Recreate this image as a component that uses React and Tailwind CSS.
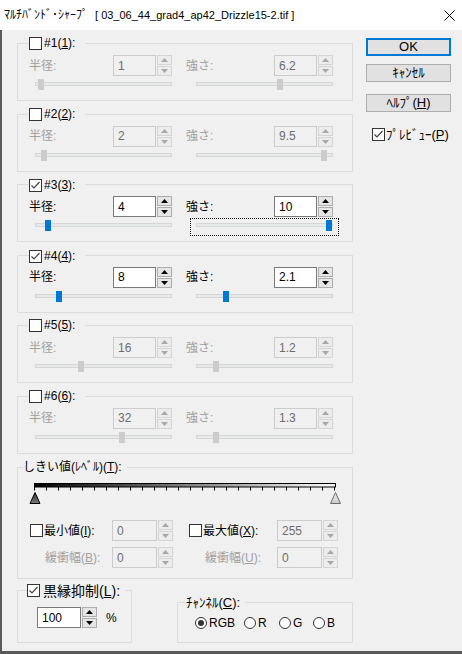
import React from 'react'

// band settings: radius / strength and where their thumbs sit
const BANDS = [
  { n: 1, on: false, r: '1', s: '6.2', rp: 9, sp: 87 },
  { n: 2, on: false, r: '2', s: '9.5', rp: 12, sp: 131 },
  { n: 3, on: true, r: '4', s: '10', rp: 16, sp: 136, focus: true },
  { n: 4, on: true, r: '8', s: '2.1', rp: 27, sp: 33 },
  { n: 5, on: false, r: '16', s: '1.2', rp: 49, sp: 23 },
  { n: 6, on: false, r: '32', s: '1.3', rp: 90, sp: 23 },
]

function Check({ checked }) {
  return (
    <span className="w-[13px] h-[13px] border border-[#333333] bg-white flex items-center justify-center shrink-0">
      {checked && (
        <svg width="11" height="11" viewBox="0 0 11 11">
          <path d="M1.5 5.5 L4 8 L9.5 2" fill="none" stroke="#444444" strokeWidth="1.2" />
        </svg>
      )}
    </span>
  )
}

function Radio({ on }) {
  return (
    <span className="w-[12px] h-[12px] rounded-full border border-[#333333] bg-white flex items-center justify-center shrink-0">
      {on && <span className="w-[6px] h-[6px] rounded-full bg-[#333333]" />}
    </span>
  )
}

function Arrow({ up, color }) {
  return (
    <svg width="7" height="4" viewBox="0 0 7 4">
      <path d={up ? 'M0 4L3.5 0L7 4Z' : 'M0 0L3.5 4L7 0Z'} fill={color} />
    </svg>
  )
}

function Spin({ disabled }) {
  const btn = disabled
    ? 'h-[10px] border border-[#d5d5d5] bg-[#ececec] flex items-center justify-center'
    : 'h-[10px] border border-[#adadad] bg-[#e5e5e5] flex items-center justify-center'
  const color = disabled ? '#a8a8a8' : '#000000'
  return (
    <div className="ml-[1px] w-[15px] h-[21px] flex flex-col justify-between shrink-0">
      <div className={btn}><Arrow up color={color} /></div>
      <div className={btn}><Arrow color={color} /></div>
    </div>
  )
}

function Field({ value, disabled, wide }) {
  const w = wide ? 'w-[45px]' : 'w-[43px]'
  const look = disabled
    ? 'border-[#cccccc] bg-[#f0f0f0] text-[#6d6d6d]'
    : 'border-[#7a7a7a] bg-white text-black'
  return (
    <div className={`${w} h-[21px] border px-[4px] flex items-center text-[12px] shrink-0 ${look}`}>
      {value}
    </div>
  )
}

function Slider({ pos, disabled, focus }) {
  return (
    <div className={`relative w-[149px] h-[18px] border ${focus ? 'border-dotted border-black' : 'border-transparent'}`}>
      <div className="absolute left-[5px] right-[5px] top-[4px] h-[4px] bg-[#e7eaea] border border-[#d6d6d6]" />
      <div
        className={`absolute top-[1px] w-[6px] h-[11px] ${disabled ? 'bg-[#cccccc]' : 'bg-[#0078d7]'}`}
        style={{ left: pos - 1 }}
      />
    </div>
  )
}

function Band({ n, on, r, s, rp, sp, focus }) {
  const lab = on ? 'text-black' : 'text-[#a0a0a0]'
  return (
    <fieldset className="border border-[#dcdcdc] w-[336px]">
      <legend className="ml-[11px] pr-[10px] h-[13px]">
        <span className="inline-flex items-center gap-[2px] h-[13px] leading-[13px]">
          <Check checked={on} />
          <span>#{n}(<span className="underline">{n}</span>):</span>
        </span>
      </legend>
      <div className="pt-[5px] pb-[5px]">
        <div className="flex items-center pl-[11px] h-[21px]">
          <span className={`w-[84px] ${lab}`}>半径:</span>
          <Field value={r} disabled={!on} />
          <Spin disabled={!on} />
          <span className={`w-[88px] ml-[14px] ${lab}`}>強さ:</span>
          <Field value={s} disabled={!on} />
          <Spin disabled={!on} />
        </div>
        <div className="flex pl-[11px] mt-[1px] gap-[12px]">
          <Slider pos={rp} disabled={!on} />
          <Slider pos={sp} disabled={!on} focus={focus} />
        </div>
      </div>
    </fieldset>
  )
}

function LevelBar() {
  const ticks = []
  for (let i = 0; i <= 25; i++) ticks.push(5.5 + i * 12)
  return (
    <svg width="314" height="21" viewBox="0 0 314 21" className="ml-[11px] block">
      <defs>
        <linearGradient id="lv" x1="0" x2="1" y1="0" y2="0">
          <stop offset="0" stopColor="#000000" />
          <stop offset="1" stopColor="#ffffff" />
        </linearGradient>
        <linearGradient id="dk" x1="0" x2="0" y1="0" y2="1">
          <stop offset="0" stopColor="#2a2a2a" />
          <stop offset="1" stopColor="#7a7a7a" />
        </linearGradient>
        <linearGradient id="lt" x1="0" x2="0" y1="0" y2="1">
          <stop offset="0" stopColor="#f4f4f4" />
          <stop offset="1" stopColor="#c8c8c8" />
        </linearGradient>
      </defs>
      <rect x="5.5" y="0.5" width="301" height="3.5" fill="url(#lv)" stroke="#000000" strokeWidth="1" />
      {ticks.map((x) => (
        <line key={x} x1={x} x2={x} y1="4" y2="7.5" stroke="#000000" strokeWidth="1" />
      ))}
      <polygon points="6,9.5 1,20.5 11,20.5" fill="url(#dk)" stroke="#000000" strokeWidth="1" />
      <polygon points="306.5,9.5 301.5,20.5 311.5,20.5" fill="url(#lt)" stroke="#6a6a6a" strokeWidth="1" />
    </svg>
  )
}

function Button({ children, def, className }) {
  return (
    <div
      className={`h-[18px] flex items-center justify-center bg-[#e1e1e1] text-[13px] ${
        def ? 'border-2 border-[#0078d7]' : 'border border-[#adadad]'
      } ${className || ''}`}
    >
      {children}
    </div>
  )
}

export default function App() {
  return (
    <div className="w-[462px] h-[654px] bg-[#f0f0f0] flex flex-col overflow-hidden text-[12px] text-black font-['Liberation_Sans','Noto_Sans_CJK_JP',sans-serif]">
      {/* title bar */}
      <div className="h-[30px] bg-white flex items-center pl-[4px] shrink-0">
        <span className="text-[12px]">ﾏﾙﾁﾊﾞﾝﾄﾞ･ｼｬｰﾌﾟ</span>
        <span className="text-[11px] ml-[7px]">[ 03_06_44_grad4_ap42_Drizzle15-2.tif ]</span>
        <svg width="11" height="11" viewBox="0 0 11 11" className="ml-auto mr-[7px]">
          <path d="M0.5 0.5 L10.5 10.5 M10.5 0.5 L0.5 10.5" stroke="#000000" strokeWidth="1" />
        </svg>
      </div>

      <div className="flex-1 flex border-l-2 border-b-[3px] border-[#5a5a5a] pl-[15px]">
        {/* left column */}
        <div className="flex flex-col pt-[7px] w-[336px]">
          <div className="flex flex-col gap-[6.5px]">
            {BANDS.map((b) => (
              <Band key={b.n} {...b} />
            ))}
          </div>

          <fieldset className="border border-[#dcdcdc] w-[336px] mt-[7.5px]">
            <legend className="ml-[5px] pr-[5px] h-[13px] leading-[13px]">
              しきい値(ﾚﾍﾞﾙ)(<span className="underline">T</span>):
            </legend>
            <div className="pt-[9px] pb-[10px]">
              <LevelBar />
              <div className="flex items-center h-[21px] mt-[16px] pl-[12px]">
                <div className="w-[82px] flex items-center gap-[1px]">
                  <Check />
                  <span>最小値(<span className="underline">I</span>):</span>
                </div>
                <Field value="0" disabled wide />
                <Spin disabled />
                <div className="w-[88px] ml-[16px] flex items-center gap-[1px]">
                  <Check />
                  <span>最大値(<span className="underline">X</span>):</span>
                </div>
                <Field value="255" disabled wide />
                <Spin disabled />
              </div>
              <div className="flex items-center h-[21px] mt-[6px] pl-[12px] text-[#a0a0a0]">
                <span className="w-[82px] pl-[15px]">緩衝幅(<span className="underline">B</span>):</span>
                <Field value="0" disabled wide />
                <Spin disabled />
                <span className="w-[88px] ml-[16px] pl-[16px]">緩衝幅(<span className="underline">U</span>):</span>
                <Field value="0" disabled wide />
                <Spin disabled />
              </div>
            </div>
          </fieldset>

          <div className="flex items-end mt-[4px]">
            <fieldset className="border border-[#dcdcdc] w-[115px]">
              <legend className="ml-[9px] pr-[5px] h-[14px]">
                <span className="inline-flex items-center gap-[3px] h-[14px] text-[14px] leading-[14px]">
                  <Check checked />
                  <span>黒縁抑制(<span className="underline">L</span>):</span>
                </span>
              </legend>
              <div className="pt-[10px] pb-[14px] pl-[19px] flex items-center">
                <div className="w-[44px] h-[21px] border border-[#7a7a7a] bg-white px-[4px] flex items-center">100</div>
                <Spin />
                <span className="ml-[9px]">%</span>
              </div>
            </fieldset>

            <fieldset className="border border-[#dcdcdc] w-[176px] ml-[45px]">
              <legend className="ml-[8px] pr-[5px] h-[13px] leading-[13px] text-[13px]">
                ﾁｬﾝﾈﾙ(<span className="underline">C</span>):
              </legend>
              <div className="pt-[2.5px] pb-[8px] pl-[17px] flex items-center h-[22.5px] box-content text-[12px]">
                <label className="w-[49px] flex items-center gap-[2px]"><Radio on />RGB</label>
                <label className="w-[35px] flex items-center gap-[2px]"><Radio />R</label>
                <label className="w-[34px] flex items-center gap-[2px]"><Radio />G</label>
                <label className="flex items-center gap-[2px]"><Radio />B</label>
              </div>
            </fieldset>
          </div>
        </div>

        {/* right column */}
        <div className="ml-[13px] pt-[8px] w-[85px] flex flex-col">
          <Button def>OK</Button>
          <Button className="mt-[8px]">ｷｬﾝｾﾙ</Button>
          <Button className="mt-[12px]">
            <span>ﾍﾙﾌﾟ(<span className="underline">H</span>)</span>
          </Button>
          <div className="mt-[13px] pl-[6px] flex items-center gap-[1px] text-[13px]">
            <Check checked />
            <span>ﾌﾟﾚﾋﾞｭｰ(<span className="underline">P</span>)</span>
          </div>
        </div>
      </div>
    </div>
  )
}
